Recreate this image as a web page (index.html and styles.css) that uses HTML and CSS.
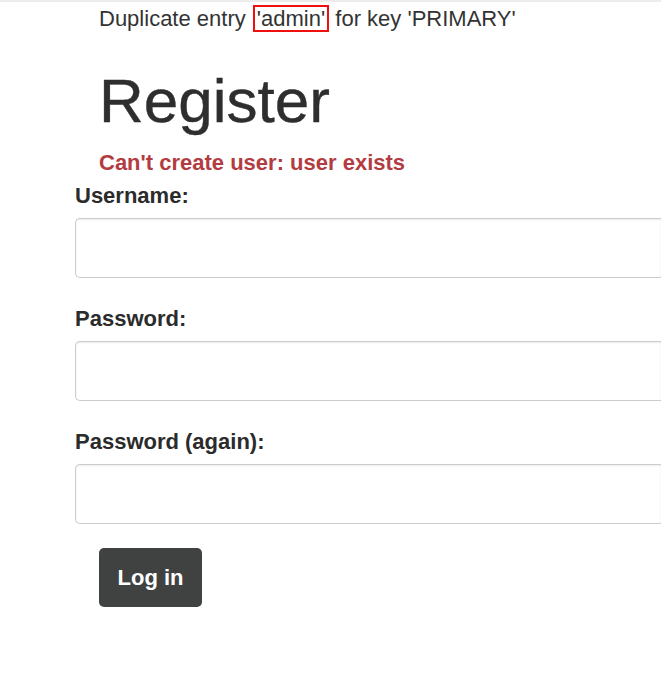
FILE: index.html
```html
<!DOCTYPE html>
<html lang="en">
<head>
<meta charset="utf-8">
<title>Register</title>
<link rel="stylesheet" href="styles.css">
</head>
<body>
<div class="topbar"></div>
<main class="page">
  <p class="notice">Duplicate entry <span class="mark">'admin'</span> for key 'PRIMARY'</p>
  <h1 class="title">Register</h1>
  <p class="error">Can't create user: user exists</p>
  <form class="form">
    <div class="group">
      <label class="label" for="u">Username:</label>
      <input class="field" id="u" type="text">
    </div>
    <div class="group">
      <label class="label" for="p1">Password:</label>
      <input class="field" id="p1" type="password">
    </div>
    <div class="group">
      <label class="label" for="p2">Password (again):</label>
      <input class="field" id="p2" type="password">
    </div>
    <div class="actions">
      <button class="btn" type="button">Log in</button>
    </div>
  </form>
</main>
</body>
</html>
```
FILE: styles.css
```css
html, body {
  margin: 0;
  padding: 0;
  overflow: hidden;
  background: #fff;
}
body {
  font-family: "Liberation Sans", Arial, sans-serif;
  font-size: 22px;
  color: #333;
  width: 661px;
  height: 683px;
}
.topbar {
  height: 2px;
  background: #ececec;
}
.page {
  padding-left: 75px;
}
.notice {
  margin: 0;
  padding-left: 24px;
  line-height: 33px;
  white-space: nowrap;
}
.mark {
  display: inline-block;
  border: 2px solid #f00f0f;
  padding: 0 2px;
  margin-left: 1px;
  line-height: 23px;
}
.title {
  margin: 32px 0 0;
  padding-left: 24px;
  font-size: 62px;
  font-weight: normal;
  line-height: 68px;
  color: #2e2e2e;
  -webkit-text-stroke: 0.4px #2e2e2e;
}
.error {
  margin: 15px 0 0;
  padding-left: 24px;
  font-weight: bold;
  line-height: 26px;
  color: #b23c41;
}
.form {
  margin-top: 7px;
}
.group {
  display: flex;
  flex-direction: column;
  align-items: stretch;
  margin-bottom: 28px;
}
.label {
  align-self: flex-start;
  font-weight: bold;
  line-height: 26px;
  margin-bottom: 9px;
  color: #2b2b2b;
}
.field {
  box-sizing: border-box;
  width: 100%;
  height: 60px;
  margin: 0;
  border: 1px solid #cccccc;
  border-right: none;
  border-radius: 5px 0 0 5px;
  box-shadow: inset 0 1px 2px rgba(0, 0, 0, 0.08);
  background: #fff;
  font: inherit;
  padding: 0 14px;
}
.actions {
  padding-left: 24px;
  margin-top: -4px;
}
.btn {
  box-sizing: border-box;
  height: 59px;
  width: 103px;
  padding: 0;
  border: none;
  border-radius: 5px;
  background: #404241;
  color: #fff;
  font-family: "Liberation Sans", Arial, sans-serif;
  font-size: 22px;
  font-weight: bold;
}
```
